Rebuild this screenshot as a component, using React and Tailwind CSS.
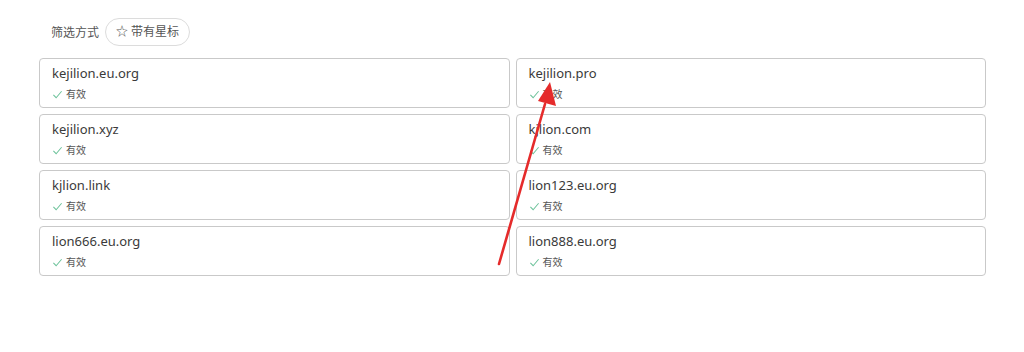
import React from "react";

const domains = [
  "kejilion.eu.org",
  "kejilion.pro",
  "kejilion.xyz",
  "kjlion.com",
  "kjlion.link",
  "lion123.eu.org",
  "lion666.eu.org",
  "lion888.eu.org",
];

function Check() {
  return (
    <svg width="11" height="11" viewBox="0 0 12 12" fill="none" className="shrink-0">
      <path d="M1.5 6.5 L4.5 9.5 L10.5 2.5" stroke="#6cc29a" strokeWidth="1.1" />
    </svg>
  );
}

export default function App() {
  return (
    <div
      className="relative w-[1024px] h-[352px] bg-white text-[#333]"
      style={{ fontFamily: '"Noto Sans", "Noto Sans CJK SC", sans-serif' }}
    >
      <div className="pl-[39px] pr-[38px] pt-[18px]">
        <div className="flex items-center gap-[6px] pl-[12px]">
          <span className="text-[12px] text-[#555] mt-[1px]">筛选方式</span>
          <button className="flex items-center gap-[3px] h-[28px] px-[10px] rounded-full border border-[#dcdcdc] text-[12px] text-[#555]">
            <span className="text-[12px]">☆</span>
            <span>带有星标</span>
          </button>
        </div>

        <div className="grid grid-cols-2 gap-x-[6px] gap-y-[6px] mt-[12px]">
          {domains.map((d) => (
            <div
              key={d}
              className="h-[50px] border border-[#c9c9c9] rounded-[4px] px-[12px] pt-[4px]"
            >
              <div className="text-[13px] leading-[20px] text-[#3a3a3a]">{d}</div>
              <div className="flex items-center gap-[3px] mt-[4px] text-[10px] leading-[14px] text-[#555]">
                <Check />
                <span>有效</span>
              </div>
            </div>
          ))}
        </div>
      </div>

      <svg
        className="absolute left-0 top-0 pointer-events-none"
        width="1024"
        height="352"
        viewBox="0 0 1024 352"
      >
        <path d="M499 264 L545 104" stroke="#e52b2b" strokeWidth="2.6" strokeLinecap="round" />
        <polygon points="550,82 556,106 538,101" fill="#e52b2b" />
      </svg>
    </div>
  );
}
